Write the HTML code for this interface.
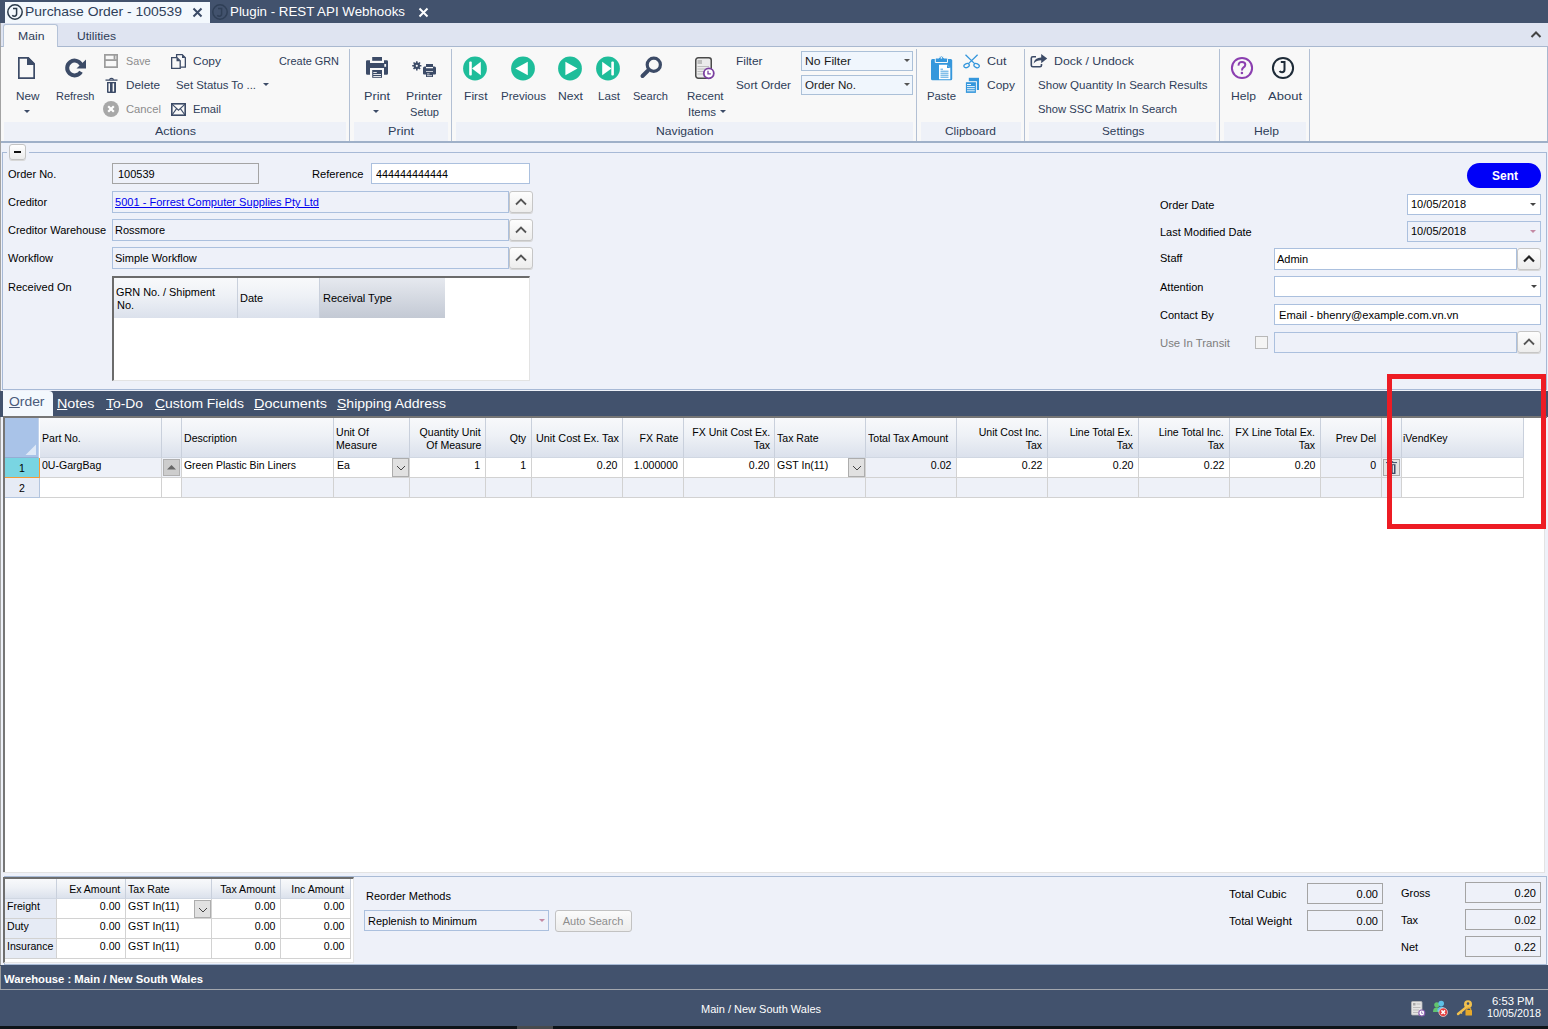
<!DOCTYPE html>
<html><head><meta charset="utf-8"><style>
html,body{margin:0;padding:0}
body{width:1548px;height:1029px;position:relative;overflow:hidden;background:#eef1f9;font-family:"Liberation Sans", sans-serif}
body>div{position:absolute}
.t{position:absolute;white-space:nowrap}
</style></head><body>
<div style="left:0px;top:0px;width:1548px;height:23px;background:#42526d"></div>
<div style="left:5px;top:2px;width:205px;height:21px;background:#f3f8fd"></div>
<svg style="position:absolute;left:7px;top:4px" width="16" height="16" viewBox="0 0 16 16"><circle cx="8" cy="8" r="7.2" fill="none" stroke="#2b3a4a" stroke-width="1.5"/><path d="M6 4.6 H9.6 V9.8 Q9.6 12.2 7.4 12.2 Q6 12.2 5.3 11.2" fill="none" stroke="#2b3a4a" stroke-width="1.5"/></svg>
<div class="t" style="left:25px;top:3.94px;font-size:12.9px;line-height:16px;color:#2f3f5a;font-weight:400;;transform:scaleX(1.0793);transform-origin:left top;">Purchase Order - 100539</div>
<svg style="position:absolute;left:192px;top:7px" width="11" height="11" viewBox="0 0 11 11"><path d="M1.5 1.5 L9.5 9.5 M9.5 1.5 L1.5 9.5" stroke="#3a4a66" stroke-width="2"/></svg>
<svg style="position:absolute;left:212px;top:4px" width="16" height="16" viewBox="0 0 16 16"><circle cx="8" cy="8" r="7.2" fill="none" stroke="#2f3f56" stroke-width="1.5"/><path d="M6 4.6 H9.6 V9.8 Q9.6 12.2 7.4 12.2 Q6 12.2 5.3 11.2" fill="none" stroke="#2f3f56" stroke-width="1.5"/></svg>
<div class="t" style="left:230px;top:3.94px;font-size:12.9px;line-height:16px;color:#ffffff;font-weight:400;;transform:scaleX(1.0334);transform-origin:left top;">Plugin - REST API Webhooks</div>
<svg style="position:absolute;left:418px;top:7px" width="11" height="11" viewBox="0 0 11 11"><path d="M1.5 1.5 L9.5 9.5 M9.5 1.5 L1.5 9.5" stroke="#ffffff" stroke-width="2"/></svg>
<div style="left:0px;top:23px;width:1548px;height:24px;background:#dfe4f1"></div>
<div style="left:0px;top:46px;width:1548px;height:1px;background:#a9b8cf"></div>
<div style="left:3px;top:24px;width:55px;height:23px;background:#f8f8f8;border:1px solid #b5c3d8;border-bottom:none;border-radius:3px 3px 0 0;box-sizing:border-box"></div>
<div class="t" style="left:17.5px;top:29.20px;font-size:11.5px;line-height:14px;color:#2f3d58;font-weight:400;;transform:scaleX(1.0627);transform-origin:left top;">Main</div>
<div class="t" style="left:76.5px;top:29.20px;font-size:11.5px;line-height:14px;color:#2f3d58;font-weight:400;;transform:scaleX(1.0523);transform-origin:left top;">Utilities</div>
<svg style="position:absolute;left:1530px;top:30px" width="12" height="10" viewBox="0 0 12 10"><path d="M1.5 7 L6 2.5 L10.5 7" fill="none" stroke="#444" stroke-width="2"/></svg>
<div style="left:0px;top:47px;width:1548px;height:95px;background:#f8f8f8"></div>
<div style="left:1547px;top:47px;width:1px;height:95px;background:#a9b8cf"></div>
<div style="left:0px;top:141px;width:1548px;height:2px;background:#9fb0c8"></div>
<div style="left:4px;top:122px;width:342px;height:19px;background:#eef1f8"></div>
<div style="left:354px;top:122px;width:94px;height:19px;background:#eef1f8"></div>
<div style="left:456px;top:122px;width:457px;height:19px;background:#eef1f8"></div>
<div style="left:921px;top:122px;width:100px;height:19px;background:#eef1f8"></div>
<div style="left:1029px;top:122px;width:187px;height:19px;background:#eef1f8"></div>
<div style="left:1224px;top:122px;width:82px;height:19px;background:#eef1f8"></div>
<div style="left:349px;top:49px;width:1px;height:92px;background:#b3c0d4"></div>
<div style="left:451px;top:49px;width:1px;height:92px;background:#b3c0d4"></div>
<div style="left:916px;top:49px;width:1px;height:92px;background:#b3c0d4"></div>
<div style="left:1024px;top:49px;width:1px;height:92px;background:#b3c0d4"></div>
<div style="left:1219px;top:49px;width:1px;height:92px;background:#b3c0d4"></div>
<div style="left:1309px;top:49px;width:1px;height:92px;background:#b3c0d4"></div>
<div class="t" style="left:155px;top:124.20px;font-size:11.5px;line-height:14px;color:#2f3d58;font-weight:400;;transform:scaleX(1.0870);transform-origin:left top;">Actions</div>
<div class="t" style="left:388px;top:124.20px;font-size:11.5px;line-height:14px;color:#2f3d58;font-weight:400;;transform:scaleX(1.0991);transform-origin:left top;">Print</div>
<div class="t" style="left:655.5px;top:124.20px;font-size:11.5px;line-height:14px;color:#2f3d58;font-weight:400;;transform:scaleX(1.0581);transform-origin:left top;">Navigation</div>
<div class="t" style="left:945px;top:124.20px;font-size:11.5px;line-height:14px;color:#2f3d58;font-weight:400;;transform:scaleX(1.0359);transform-origin:left top;">Clipboard</div>
<div class="t" style="left:1102px;top:124.20px;font-size:11.5px;line-height:14px;color:#2f3d58;font-weight:400;;transform:scaleX(1.0226);transform-origin:left top;">Settings</div>
<div class="t" style="left:1253.5px;top:124.20px;font-size:11.5px;line-height:14px;color:#2f3d58;font-weight:400;;transform:scaleX(1.0568);transform-origin:left top;">Help</div>
<svg style="position:absolute;left:17px;top:56px" width="20" height="24" viewBox="0 0 20 24"><path d="M1.85 1.85 H11 L17.15 8 V22.15 H1.85 Z" fill="none" stroke="#3c4b67" stroke-width="1.7"/><path d="M10 1 H11.5 L18 7.5 V9 H10 Z" fill="#3c4b67"/></svg>
<div class="t" style="left:15.5px;top:89.20px;font-size:11.5px;line-height:14px;color:#2f3d58;font-weight:400;;transform:scaleX(1.0210);transform-origin:left top;">New</div>
<svg style="position:absolute;left:23.5px;top:109.5px" width="6" height="4" viewBox="0 0 6 4"><path d="M0 0 H6 L3 3 Z" fill="#3c4b67"/></svg>
<svg style="position:absolute;left:63px;top:57px" width="24" height="23" viewBox="0 0 24 23"><path d="M18.0 14.7 A7.4 7.4 0 1 1 18.3 7.87" fill="none" stroke="#3c4b67" stroke-width="4"/><path d="M13.5 11.6 H23 V2.5 Z" fill="#3c4b67"/></svg>
<div class="t" style="left:55.5px;top:89.20px;font-size:11.5px;line-height:14px;color:#2f3d58;font-weight:400;;transform:scaleX(0.9558);transform-origin:left top;">Refresh</div>
<svg style="position:absolute;left:104px;top:54px" width="14" height="14" viewBox="0 0 14 14"><rect x="0.85" y="0.85" width="12.3" height="12.3" fill="none" stroke="#9c9c9c" stroke-width="1.7"/><rect x="0" y="5.2" width="14" height="1.8" fill="#9c9c9c"/><rect x="9.6" y="0" width="1.8" height="5.5" fill="#9c9c9c"/></svg>
<div class="t" style="left:126px;top:53.90px;font-size:11.5px;line-height:14px;color:#8c8c8c;font-weight:400;;transform:scaleX(0.9344);transform-origin:left top;">Save</div>
<svg style="position:absolute;left:105px;top:77px" width="13" height="16" viewBox="0 0 13 16"><path d="M0.5 3.1 H12.5" stroke="#3c4b67" stroke-width="1.3"/><path d="M4.3 2.6 Q6.5 0.2 8.7 2.6" fill="none" stroke="#3c4b67" stroke-width="1.2"/><path d="M2 5 H11 V15 Q11 16 10 16 H3 Q2 16 2 15 Z" fill="#3c4b67"/><rect x="3.5" y="6.3" width="1.5" height="8.3" fill="#f8f8f8"/><rect x="7.6" y="6.3" width="1.5" height="8.3" fill="#f8f8f8"/></svg>
<div class="t" style="left:126px;top:78.20px;font-size:11.5px;line-height:14px;color:#2f3d58;font-weight:400;;transform:scaleX(1.0226);transform-origin:left top;">Delete</div>
<svg style="position:absolute;left:103px;top:101px" width="16" height="16" viewBox="0 0 16 16"><circle cx="8" cy="8" r="8" fill="#a8a8a8"/><path d="M5.2 5.2 L10.8 10.8 M10.8 5.2 L5.2 10.8" stroke="#fff" stroke-width="2.2"/></svg>
<div class="t" style="left:126px;top:102.20px;font-size:11.5px;line-height:14px;color:#8c8c8c;font-weight:400;;transform:scaleX(0.9773);transform-origin:left top;">Cancel</div>
<svg style="position:absolute;left:171px;top:54px" width="15" height="15" viewBox="0 0 15 15"><path d="M5.6 3.4 V0.65 H11.2 L14.35 3.8 V13.2 H9.2" fill="none" stroke="#3c4b67" stroke-width="1.3"/><path d="M0.65 3.6 H6 L9.2 6.8 V14.35 H0.65 Z" fill="none" stroke="#3c4b67" stroke-width="1.3"/><path d="M5.5 3.6 V7.2 H9.2 Z" fill="#3c4b67"/><path d="M11 0.6 V4 H14.4 Z" fill="#3c4b67"/></svg>
<div class="t" style="left:193px;top:54.20px;font-size:11.5px;line-height:14px;color:#2f3d58;font-weight:400;;transform:scaleX(1.0425);transform-origin:left top;">Copy</div>
<div class="t" style="left:176px;top:78.20px;font-size:11.5px;line-height:14px;color:#2f3d58;font-weight:400;;transform:scaleX(0.9878);transform-origin:left top;">Set Status To ...</div>
<svg style="position:absolute;left:263px;top:83px" width="6" height="4" viewBox="0 0 6 4"><path d="M0 0 H6 L3 3 Z" fill="#3c4b67"/></svg>
<svg style="position:absolute;left:171px;top:103px" width="15" height="13" viewBox="0 0 15 13"><rect x="0.8" y="0.8" width="13.4" height="11.4" fill="none" stroke="#3c4b67" stroke-width="1.6"/><path d="M1 1.2 L7.5 7.2 L14 1.2 M1 12 L5.6 5.6 M14 12 L9.4 5.6" fill="none" stroke="#3c4b67" stroke-width="1.1"/></svg>
<div class="t" style="left:193px;top:102.20px;font-size:11.5px;line-height:14px;color:#2f3d58;font-weight:400;;transform:scaleX(0.9734);transform-origin:left top;">Email</div>
<div class="t" style="left:279px;top:54.20px;font-size:11.5px;line-height:14px;color:#2f3d58;font-weight:400;;transform:scaleX(0.9481);transform-origin:left top;">Create GRN</div>
<svg style="position:absolute;left:365px;top:56px" width="24" height="23" viewBox="0 0 24 23"><rect x="7.2" y="1" width="9.8" height="3.8" fill="#3c4b67"/><path d="M1 5.5 Q1 4.2 2.3 4.2 H5 V7 H19 V4.2 H21.7 Q23 4.2 23 5.5 V17.4 Q23 18.7 21.7 18.7 H19 V12 H5 V18.7 H2.3 Q1 18.7 1 17.4 Z" fill="#3c4b67"/><rect x="19.3" y="8" width="1.8" height="2.8" fill="#f8f8f8"/><rect x="7.2" y="14" width="9.8" height="7.8" fill="#3c4b67"/><path d="M8.3 16.5 H11.8 M8.3 18.5 H16 M8.3 20.5 H16" stroke="#f8f8f8" stroke-width="0.9"/></svg>
<div class="t" style="left:364px;top:89.20px;font-size:11.5px;line-height:14px;color:#2f3d58;font-weight:400;;transform:scaleX(1.0991);transform-origin:left top;">Print</div>
<svg style="position:absolute;left:372.5px;top:109.5px" width="6" height="4" viewBox="0 0 6 4"><path d="M0 0 H6 L3 3 Z" fill="#3c4b67"/></svg>
<svg style="position:absolute;left:411px;top:60px" width="26" height="18" viewBox="0 0 26 18"><circle cx="5.8" cy="5.8" r="3.2" fill="#3c4b67"/><path d="M5.8 1.2 V10.4 M1.2 5.8 H10.4 M2.55 2.55 L9.05 9.05 M9.05 2.55 L2.55 9.05" stroke="#3c4b67" stroke-width="1.6"/><circle cx="5.8" cy="5.8" r="1.1" fill="#f8f8f8"/><rect x="15" y="4" width="7" height="3" fill="#3c4b67"/><path d="M12 8 Q12 6.5 13.5 6.5 H15 V8.3 H22 V6.5 H23.5 Q25 6.5 25 8 V13.5 Q25 14.5 24 14.5 H22 V11.3 H15 V14.5 H13 Q12 14.5 12 13.5 Z" fill="#3c4b67"/><rect x="15" y="12" width="7" height="5" fill="#3c4b67"/><path d="M16 13.9 H18.5 M16 15.7 H21" stroke="#f8f8f8" stroke-width="0.8"/></svg>
<div class="t" style="left:406px;top:89.20px;font-size:11.5px;line-height:14px;color:#2f3d58;font-weight:400;;transform:scaleX(1.0627);transform-origin:left top;">Printer</div>
<div class="t" style="left:410px;top:105.20px;font-size:11.5px;line-height:14px;color:#2f3d58;font-weight:400;;transform:scaleX(0.9647);transform-origin:left top;">Setup</div>
<svg style="position:absolute;left:462px;top:55.4px" width="26" height="27" viewBox="0 0 26 27"><circle cx="13" cy="13.5" r="11.9" fill="#1ebd9a"/><rect x="7.2" y="6.5" width="2.6" height="14" rx="1" fill="#fff"/><path d="M10 13.5 L18.8 6.8 V20.2 Z" fill="#fff"/></svg>
<svg style="position:absolute;left:510px;top:55.4px" width="26" height="27" viewBox="0 0 26 27"><circle cx="13" cy="13.5" r="11.9" fill="#1ebd9a"/><path d="M5.4 13.5 L17.8 6.8 V20.2 Z" fill="#fff"/></svg>
<svg style="position:absolute;left:557px;top:55.4px" width="26" height="27" viewBox="0 0 26 27"><circle cx="13" cy="13.5" r="11.9" fill="#1ebd9a"/><path d="M20.5 13.5 L8.4 6.8 V20.2 Z" fill="#fff"/></svg>
<svg style="position:absolute;left:595px;top:55.4px" width="26" height="27" viewBox="0 0 26 27"><circle cx="13" cy="13.5" r="11.9" fill="#1ebd9a"/><rect x="16.3" y="6.5" width="2.6" height="14" rx="1" fill="#fff"/><path d="M16.5 13.5 L7.2 6.8 V20.2 Z" fill="#fff"/></svg>
<div class="t" style="left:464px;top:89.20px;font-size:11.5px;line-height:14px;color:#2f3d58;font-weight:400;;transform:scaleX(1.0510);transform-origin:left top;">First</div>
<div class="t" style="left:500.5px;top:89.20px;font-size:11.5px;line-height:14px;color:#2f3d58;font-weight:400;;transform:scaleX(1.0056);transform-origin:left top;">Previous</div>
<div class="t" style="left:558.3px;top:89.20px;font-size:11.5px;line-height:14px;color:#2f3d58;font-weight:400;;transform:scaleX(1.0568);transform-origin:left top;">Next</div>
<div class="t" style="left:598px;top:89.20px;font-size:11.5px;line-height:14px;color:#2f3d58;font-weight:400;;transform:scaleX(1.0115);transform-origin:left top;">Last</div>
<svg style="position:absolute;left:639px;top:55px" width="24" height="25" viewBox="0 0 24 25"><circle cx="14.8" cy="9.8" r="6.6" fill="none" stroke="#3c4b67" stroke-width="3.2"/><path d="M8.8 15.8 L3.5 21" stroke="#3c4b67" stroke-width="4" stroke-linecap="round"/></svg>
<div class="t" style="left:633px;top:89.20px;font-size:11.5px;line-height:14px;color:#2f3d58;font-weight:400;;transform:scaleX(0.9605);transform-origin:left top;">Search</div>
<svg style="position:absolute;left:694px;top:56px" width="21" height="24" viewBox="0 0 21 24"><rect x="1.75" y="1.75" width="15.5" height="20.5" rx="2.5" fill="#ebebeb" stroke="#4a4a4a" stroke-width="1.5"/><rect x="3.5" y="4" width="4.5" height="4" fill="#bdbdbd"/><path d="M3.5 10.5 H15 M3.5 13 H15 M3.5 15.5 H12 M3.5 18 H11" stroke="#bdbdbd" stroke-width="1.2"/><circle cx="14.8" cy="17.3" r="5" fill="#fff" stroke="#7a3fa0" stroke-width="1.8"/><path d="M14 14.8 V17.8 H16.8" fill="none" stroke="#7a3fa0" stroke-width="1.3"/></svg>
<div class="t" style="left:686.5px;top:89.20px;font-size:11.5px;line-height:14px;color:#2f3d58;font-weight:400;;transform:scaleX(1.0017);transform-origin:left top;">Recent</div>
<div class="t" style="left:688px;top:105.20px;font-size:11.5px;line-height:14px;color:#2f3d58;font-weight:400;;transform:scaleX(0.9956);transform-origin:left top;">Items</div>
<svg style="position:absolute;left:719.5px;top:109.5px" width="6" height="4" viewBox="0 0 6 4"><path d="M0 0 H6 L3 3 Z" fill="#3c4b67"/></svg>
<div class="t" style="left:736px;top:54.20px;font-size:11.5px;line-height:14px;color:#2f3d58;font-weight:400;;transform:scaleX(1.0367);transform-origin:left top;">Filter</div>
<div class="t" style="left:736px;top:78.20px;font-size:11.5px;line-height:14px;color:#2f3d58;font-weight:400;;transform:scaleX(1.0244);transform-origin:left top;">Sort Order</div>
<div style="left:801px;top:51px;width:112px;height:20px;background:#f0f6fd;border:1px solid #abc0d8;box-sizing:border-box"></div>
<div class="t" style="left:805px;top:54.20px;font-size:11.5px;line-height:14px;color:#1a1a1a;font-weight:400;;transform:scaleX(1.0586);transform-origin:left top;">No Filter</div>
<svg style="position:absolute;left:904px;top:59px" width="6" height="4" viewBox="0 0 6 4"><path d="M0 0 H6 L3 3 Z" fill="#555"/></svg>
<div style="left:801px;top:75px;width:112px;height:20px;background:#f0f6fd;border:1px solid #abc0d8;box-sizing:border-box"></div>
<div class="t" style="left:805px;top:78.20px;font-size:11.5px;line-height:14px;color:#1a1a1a;font-weight:400;;transform:scaleX(1.0099);transform-origin:left top;">Order No.</div>
<svg style="position:absolute;left:904px;top:83px" width="6" height="4" viewBox="0 0 6 4"><path d="M0 0 H6 L3 3 Z" fill="#555"/></svg>
<svg style="position:absolute;left:930px;top:55px" width="24" height="26" viewBox="0 0 24 26"><rect x="1" y="4" width="21.2" height="21.2" rx="1.5" fill="#3597dc"/><path d="M5.3 7.5 V4.2 Q5.3 3 6.5 3 H9 Q9 1 11.4 1 Q13.8 1 13.8 3 H16.3 Q17.5 3 17.5 4.2 V7.5 Z" fill="#3597dc" stroke="#f8f8f8" stroke-width="1"/><circle cx="11.4" cy="2.8" r="0.9" fill="#f8f8f8"/><path d="M9 9.7 H17.2 L20.3 12.8 V24.2 H9 Z" fill="#fff"/><path d="M17 9.7 V13 H20.3 Z" fill="#3597dc"/><path d="M10.5 14.2 H13 M10.5 16.2 H18.5 M10.5 18.2 H18.5 M10.5 20.2 H18.5 M10.5 22.2 H18.5" stroke="#3597dc" stroke-width="0.9"/></svg>
<div class="t" style="left:927px;top:89.20px;font-size:11.5px;line-height:14px;color:#2f3d58;font-weight:400;;transform:scaleX(0.9857);transform-origin:left top;">Paste</div>
<svg style="position:absolute;left:963px;top:54px" width="18" height="15" viewBox="0 0 18 15"><path d="M2.5 0.8 L11.6 9.6 M14.6 0.8 L5.5 9.6" stroke="#3597dc" stroke-width="1.3"/><ellipse cx="3.6" cy="11.6" rx="2.8" ry="2" fill="none" stroke="#3597dc" stroke-width="1.3" transform="rotate(-25 3.6 11.6)"/><ellipse cx="13.6" cy="11.6" rx="2.8" ry="2" fill="none" stroke="#3597dc" stroke-width="1.3" transform="rotate(25 13.6 11.6)"/></svg>
<div class="t" style="left:987px;top:54.20px;font-size:11.5px;line-height:14px;color:#2f3d58;font-weight:400;;transform:scaleX(1.0890);transform-origin:left top;">Cut</div>
<svg style="position:absolute;left:965px;top:77px" width="15" height="16" viewBox="0 0 15 16"><rect x="3.8" y="0.8" width="10.2" height="12.2" fill="#3597dc"/><rect x="0" y="4.2" width="11.9" height="11.8" fill="#f8f8f8"/><rect x="0.9" y="5.2" width="10" height="10.7" fill="#3597dc"/><path d="M2 7.5 H6 M2 9.6 H9.8 M2 11.7 H9.8 M2 13.8 H9.8" stroke="#fff" stroke-width="0.9"/></svg>
<div class="t" style="left:987px;top:78.20px;font-size:11.5px;line-height:14px;color:#2f3d58;font-weight:400;;transform:scaleX(1.0425);transform-origin:left top;">Copy</div>
<svg style="position:absolute;left:1030px;top:53px" width="18" height="15" viewBox="0 0 18 15"><path d="M6 3.8 H2.8 Q1.3 3.8 1.3 5.3 V12.2 Q1.3 13.7 2.8 13.7 H10 Q11.5 13.7 11.5 12.2 V11" fill="none" stroke="#3c4b67" stroke-width="1.6"/><path d="M3.6 10.5 Q4.6 4.7 11.2 4.6 V1 L17.2 5.6 L11.2 10.2 V7.2 Q6.6 7.2 3.6 10.5 Z" fill="#3c4b67"/></svg>
<div class="t" style="left:1054px;top:54.20px;font-size:11.5px;line-height:14px;color:#2f3d58;font-weight:400;;transform:scaleX(1.0698);transform-origin:left top;">Dock / Undock</div>
<div class="t" style="left:1038px;top:78.20px;font-size:11.5px;line-height:14px;color:#2f3d58;font-weight:400;;transform:scaleX(1.0044);transform-origin:left top;">Show Quantity In Search Results</div>
<div class="t" style="left:1038px;top:102.20px;font-size:11.5px;line-height:14px;color:#2f3d58;font-weight:400;;transform:scaleX(0.9752);transform-origin:left top;">Show SSC Matrix In Search</div>
<svg style="position:absolute;left:1230px;top:56px" width="24" height="24" viewBox="0 0 24 24"><circle cx="12" cy="12" r="10.1" fill="none" stroke="#8b3fb0" stroke-width="2"/><path d="M8.6 9.6 Q8.4 6 12 6 Q15.3 6 15.3 8.7 Q15.3 10.3 13.3 11.6 Q12 12.5 12 14.6" fill="none" stroke="#8b3fb0" stroke-width="2"/><circle cx="11.9" cy="17" r="1.3" fill="#8b3fb0"/></svg>
<div class="t" style="left:1230.5px;top:89.20px;font-size:11.5px;line-height:14px;color:#2f3d58;font-weight:400;;transform:scaleX(1.0568);transform-origin:left top;">Help</div>
<svg style="position:absolute;left:1271px;top:56px" width="24" height="24" viewBox="0 0 24 24"><circle cx="12" cy="12" r="10.1" fill="none" stroke="#1e2b38" stroke-width="2"/><path d="M9.8 6 H13.5 V13.5 Q13.5 16.3 11 16.3 Q9.3 16.3 8.6 15" fill="none" stroke="#1e2b38" stroke-width="2"/></svg>
<div class="t" style="left:1267.5px;top:89.20px;font-size:11.5px;line-height:14px;color:#2f3d58;font-weight:400;;transform:scaleX(1.1310);transform-origin:left top;">About</div>
<div style="left:0px;top:23px;width:1px;height:966px;background:#a3a3a3"></div>
<div style="left:1px;top:143px;width:1547px;height:247px;background:#eef1f9"></div>
<div style="left:2px;top:152px;width:1545px;height:238px;border:1px solid #a7b9d6;box-sizing:border-box"></div>
<div style="left:7px;top:150px;width:22px;height:5px;background:#eef1f9"></div>
<div style="left:9px;top:144px;width:17px;height:16px;background:linear-gradient(#ffffff,#ececec);border:1px solid #c3c3c3;border-radius:3px;box-sizing:border-box;box-shadow:0 1px 0 #d8d8d8"></div>
<div style="left:14px;top:151px;width:7px;height:1.5px;background:#111"></div>
<div class="t" style="left:8px;top:167.36px;font-size:11px;line-height:14px;color:#000;font-weight:400;;">Order No.</div>
<div class="t" style="left:8px;top:195.36px;font-size:11px;line-height:14px;color:#000;font-weight:400;;">Creditor</div>
<div class="t" style="left:8px;top:223.36px;font-size:11px;line-height:14px;color:#000;font-weight:400;;">Creditor Warehouse</div>
<div class="t" style="left:8px;top:251.36px;font-size:11px;line-height:14px;color:#000;font-weight:400;;">Workflow</div>
<div class="t" style="left:8px;top:280.36px;font-size:11px;line-height:14px;color:#000;font-weight:400;;">Received On</div>
<div style="left:112px;top:163px;width:147px;height:21px;border:1px solid #a4a4a4;box-sizing:border-box"></div>
<div class="t" style="left:118px;top:167.36px;font-size:11px;line-height:14px;color:#000;font-weight:400;;">100539</div>
<div class="t" style="left:312px;top:167.36px;font-size:11px;line-height:14px;color:#000;font-weight:400;;transform:scaleX(1.0145);transform-origin:left top;">Reference</div>
<div style="left:371px;top:163px;width:159px;height:21px;background:#fff;border:1px solid #abc0de;box-sizing:border-box"></div>
<div class="t" style="left:376px;top:167.36px;font-size:11px;line-height:14px;color:#000;font-weight:400;;transform:scaleX(0.9806);transform-origin:left top;">444444444444</div>
<div style="left:112px;top:191px;width:397px;height:22px;border:1px solid #abc0de;box-sizing:border-box"></div>
<div style="left:509px;top:191px;width:24px;height:22px;background:linear-gradient(#fdfdfd,#ededed);border:1px solid #c6c6c6;border-radius:3px;box-sizing:border-box;box-shadow:0 1px 0 #d6d6d6"></div>
<svg style="position:absolute;left:514px;top:197px" width="14" height="9" viewBox="0 0 14 9"><path d="M2 7.5 L7 2.5 L12 7.5" fill="none" stroke="#555" stroke-width="1.8"/></svg>
<div class="t" style="left:115px;top:195.36px;font-size:11px;line-height:14px;color:#0000ee;font-weight:400;text-decoration:underline;transform:scaleX(1.0050);transform-origin:left top;">5001 - Forrest Computer Supplies Pty Ltd</div>
<div style="left:112px;top:219px;width:397px;height:22px;border:1px solid #abc0de;box-sizing:border-box"></div>
<div style="left:509px;top:219px;width:24px;height:22px;background:linear-gradient(#fdfdfd,#ededed);border:1px solid #c6c6c6;border-radius:3px;box-sizing:border-box;box-shadow:0 1px 0 #d6d6d6"></div>
<svg style="position:absolute;left:514px;top:225px" width="14" height="9" viewBox="0 0 14 9"><path d="M2 7.5 L7 2.5 L12 7.5" fill="none" stroke="#555" stroke-width="1.8"/></svg>
<div class="t" style="left:115px;top:223.36px;font-size:11px;line-height:14px;color:#000;font-weight:400;;">Rossmore</div>
<div style="left:112px;top:247px;width:397px;height:22px;border:1px solid #abc0de;box-sizing:border-box"></div>
<div style="left:509px;top:247px;width:24px;height:22px;background:linear-gradient(#fdfdfd,#ededed);border:1px solid #c6c6c6;border-radius:3px;box-sizing:border-box;box-shadow:0 1px 0 #d6d6d6"></div>
<svg style="position:absolute;left:514px;top:253px" width="14" height="9" viewBox="0 0 14 9"><path d="M2 7.5 L7 2.5 L12 7.5" fill="none" stroke="#555" stroke-width="1.8"/></svg>
<div class="t" style="left:115px;top:251.36px;font-size:11px;line-height:14px;color:#000;font-weight:400;;">Simple Workflow</div>
<div style="left:112px;top:276px;width:418px;height:105px;background:#fff;border:1px solid;border-color:#6b6b6b #e3e3e3 #e3e3e3 #6b6b6b;border-width:2px 1px 1px 2px;box-sizing:border-box"></div>
<div style="left:114px;top:278px;width:124px;height:40px;background:linear-gradient(#f8f9fb 0%,#eef1f6 45%,#dbe1ec 100%);border-right:1px solid #c9d0dc;box-sizing:border-box"></div>
<div style="left:238px;top:278px;width:82px;height:40px;background:linear-gradient(#f8f9fb 0%,#eef1f6 45%,#dbe1ec 100%);border-right:1px solid #c9d0dc;box-sizing:border-box"></div>
<div style="left:320px;top:278px;width:125px;height:40px;background:linear-gradient(#e6e9ef,#c3c9d4);box-sizing:border-box"></div>
<div class="t" style="left:115.5px;top:285.36px;font-size:11px;line-height:14px;color:#000;font-weight:400;;transform:scaleX(0.9874);transform-origin:left top;">GRN No. / Shipment</div>
<div class="t" style="left:117px;top:298.36px;font-size:11px;line-height:14px;color:#000;font-weight:400;;">No.</div>
<div class="t" style="left:240px;top:291.36px;font-size:11px;line-height:14px;color:#000;font-weight:400;;">Date</div>
<div class="t" style="left:323px;top:291.36px;font-size:11px;line-height:14px;color:#000;font-weight:400;;transform:scaleX(1.0016);transform-origin:left top;">Receival Type</div>
<div style="left:1467px;top:163px;width:74px;height:25px;background:#0000f8;border-radius:13px"></div>
<div class="t" style="left:1491.5px;top:168.53px;font-size:12px;line-height:15px;color:#fff;font-weight:700;;transform:scaleX(0.9994);transform-origin:left top;">Sent</div>
<div class="t" style="left:1160px;top:198.36px;font-size:11px;line-height:14px;color:#000;font-weight:400;;">Order Date</div>
<div style="left:1407px;top:194px;width:134px;height:21px;background:#fff;border:1px solid #abc0de;box-sizing:border-box"></div>
<div class="t" style="left:1411px;top:197.36px;font-size:11px;line-height:14px;color:#000;font-weight:400;;">10/05/2018</div>
<svg style="position:absolute;left:1530px;top:203px" width="6" height="4" viewBox="0 0 6 4"><path d="M0 0 H6 L3 3 Z" fill="#444"/></svg>
<div class="t" style="left:1160px;top:225.36px;font-size:11px;line-height:14px;color:#000;font-weight:400;;">Last Modified Date</div>
<div style="left:1407px;top:221px;width:134px;height:21px;border:1px solid #abc0de;box-sizing:border-box"></div>
<div class="t" style="left:1411px;top:224.36px;font-size:11px;line-height:14px;color:#000;font-weight:400;;">10/05/2018</div>
<svg style="position:absolute;left:1530px;top:230px" width="6" height="4" viewBox="0 0 6 4"><path d="M0 0 H6 L3 3 Z" fill="#c48aa4"/></svg>
<div class="t" style="left:1160px;top:251.36px;font-size:11px;line-height:14px;color:#000;font-weight:400;;">Staff</div>
<div style="left:1274px;top:248px;width:243px;height:22px;background:#fff;border:1px solid #abc0de;box-sizing:border-box"></div>
<div class="t" style="left:1277px;top:252.36px;font-size:11px;line-height:14px;color:#000;font-weight:400;;">Admin</div>
<div style="left:1517px;top:248px;width:24px;height:22px;background:linear-gradient(#fdfdfd,#ededed);border:1px solid #c6c6c6;border-radius:3px;box-sizing:border-box;box-shadow:0 1px 0 #d6d6d6"></div>
<svg style="position:absolute;left:1522px;top:254px" width="14" height="9" viewBox="0 0 14 9"><path d="M2 7.5 L7 2.5 L12 7.5" fill="none" stroke="#222" stroke-width="2.2"/></svg>
<div class="t" style="left:1160px;top:280.36px;font-size:11px;line-height:14px;color:#000;font-weight:400;;">Attention</div>
<div style="left:1274px;top:276px;width:267px;height:21px;background:#fff;border:1px solid #abc0de;box-sizing:border-box"></div>
<svg style="position:absolute;left:1531px;top:285px" width="6" height="4" viewBox="0 0 6 4"><path d="M0 0 H6 L3 3 Z" fill="#444"/></svg>
<div class="t" style="left:1160px;top:308.36px;font-size:11px;line-height:14px;color:#000;font-weight:400;;">Contact By</div>
<div style="left:1274px;top:304px;width:267px;height:21px;background:#fff;border:1px solid #abc0de;box-sizing:border-box"></div>
<div class="t" style="left:1279px;top:308.36px;font-size:11px;line-height:14px;color:#000;font-weight:400;;transform:scaleX(1.0150);transform-origin:left top;">Email - bhenry@example.com.vn.vn</div>
<div class="t" style="left:1160px;top:336.36px;font-size:11px;line-height:14px;color:#7d7d7d;font-weight:400;;transform:scaleX(1.0315);transform-origin:left top;">Use In Transit</div>
<div style="left:1255px;top:336px;width:13px;height:13px;background:#f4f4f4;border:1px solid #b8b8b8;box-sizing:border-box"></div>
<div style="left:1274px;top:332px;width:243px;height:21px;border:1px solid #abc0de;box-sizing:border-box"></div>
<div style="left:1517px;top:331px;width:24px;height:22px;background:linear-gradient(#fdfdfd,#ededed);border:1px solid #c6c6c6;border-radius:3px;box-sizing:border-box;box-shadow:0 1px 0 #d6d6d6"></div>
<svg style="position:absolute;left:1522px;top:337px" width="14" height="9" viewBox="0 0 14 9"><path d="M2 7.5 L7 2.5 L12 7.5" fill="none" stroke="#555" stroke-width="1.8"/></svg>
<div style="left:0px;top:391px;width:1548px;height:26px;background:#42526d"></div>
<div style="left:2px;top:389px;width:1545px;height:1px;background:#a7b9d6"></div>
<div style="left:3px;top:391px;width:50px;height:25px;background:#f3f8fd;border-radius:0 4px 0 0"></div>
<div class="t" style="left:9px;top:393.04px;font-size:13.5px;line-height:17px;color:#4a5a7a;font-weight:400;;transform:scaleX(1.0281);transform-origin:left top;"><u>O</u>rder</div>
<div class="t" style="left:57px;top:395.04px;font-size:13.5px;line-height:17px;color:#fff;font-weight:400;;transform:scaleX(1.0629);transform-origin:left top;"><u>N</u>otes</div>
<div class="t" style="left:105.8px;top:395.04px;font-size:13.5px;line-height:17px;color:#fff;font-weight:400;;transform:scaleX(1.0273);transform-origin:left top;"><u>T</u>o-Do</div>
<div class="t" style="left:155px;top:395.04px;font-size:13.5px;line-height:17px;color:#fff;font-weight:400;;transform:scaleX(1.0315);transform-origin:left top;"><u>C</u>ustom Fields</div>
<div class="t" style="left:254px;top:395.04px;font-size:13.5px;line-height:17px;color:#fff;font-weight:400;;transform:scaleX(1.0691);transform-origin:left top;"><u>D</u>ocuments</div>
<div class="t" style="left:337px;top:395.04px;font-size:13.5px;line-height:17px;color:#fff;font-weight:400;;transform:scaleX(1.0372);transform-origin:left top;"><u>S</u>hipping Address</div>
<div style="left:3px;top:416px;width:1542px;height:457px;background:#fff"></div>
<div style="left:3px;top:416px;width:1544px;height:2px;background:#767676"></div>
<div style="left:3px;top:416px;width:2px;height:457px;background:#767676"></div>
<div style="left:3px;top:872px;width:1542px;height:1px;background:#e3e3e3"></div>
<div style="left:1544px;top:418px;width:1px;height:455px;background:#e3e3e3"></div>
<div style="left:5px;top:418px;width:34px;height:40px;background:#a9c3e8;border-right:1px solid #c2d3ec;border-bottom:1px solid #94aed4;box-sizing:border-box"></div>
<svg style="position:absolute;left:25px;top:444px" width="12" height="12" viewBox="0 0 12 12"><path d="M11 0.5 V11 H0.5 Z" fill="#dfe9f7"/></svg>
<div style="left:40px;top:418px;width:122px;height:40px;background:linear-gradient(#f8f9fb 0%,#eef1f6 45%,#dbe1ec 100%);border-right:1px solid #c9d0dc;border-bottom:1px solid #d0d7e2;box-sizing:border-box"></div>
<div style="left:162px;top:418px;width:20px;height:40px;background:linear-gradient(#f8f9fb 0%,#eef1f6 45%,#dbe1ec 100%);border-right:1px solid #c9d0dc;border-bottom:1px solid #d0d7e2;box-sizing:border-box"></div>
<div style="left:182px;top:418px;width:152px;height:40px;background:linear-gradient(#f8f9fb 0%,#eef1f6 45%,#dbe1ec 100%);border-right:1px solid #c9d0dc;border-bottom:1px solid #d0d7e2;box-sizing:border-box"></div>
<div style="left:334px;top:418px;width:76px;height:40px;background:linear-gradient(#f8f9fb 0%,#eef1f6 45%,#dbe1ec 100%);border-right:1px solid #c9d0dc;border-bottom:1px solid #d0d7e2;box-sizing:border-box"></div>
<div style="left:410px;top:418px;width:76px;height:40px;background:linear-gradient(#f8f9fb 0%,#eef1f6 45%,#dbe1ec 100%);border-right:1px solid #c9d0dc;border-bottom:1px solid #d0d7e2;box-sizing:border-box"></div>
<div style="left:486px;top:418px;width:46px;height:40px;background:linear-gradient(#f8f9fb 0%,#eef1f6 45%,#dbe1ec 100%);border-right:1px solid #c9d0dc;border-bottom:1px solid #d0d7e2;box-sizing:border-box"></div>
<div style="left:532px;top:418px;width:91px;height:40px;background:linear-gradient(#f8f9fb 0%,#eef1f6 45%,#dbe1ec 100%);border-right:1px solid #c9d0dc;border-bottom:1px solid #d0d7e2;box-sizing:border-box"></div>
<div style="left:623px;top:418px;width:61px;height:40px;background:linear-gradient(#f8f9fb 0%,#eef1f6 45%,#dbe1ec 100%);border-right:1px solid #c9d0dc;border-bottom:1px solid #d0d7e2;box-sizing:border-box"></div>
<div style="left:684px;top:418px;width:91px;height:40px;background:linear-gradient(#f8f9fb 0%,#eef1f6 45%,#dbe1ec 100%);border-right:1px solid #c9d0dc;border-bottom:1px solid #d0d7e2;box-sizing:border-box"></div>
<div style="left:775px;top:418px;width:91px;height:40px;background:linear-gradient(#f8f9fb 0%,#eef1f6 45%,#dbe1ec 100%);border-right:1px solid #c9d0dc;border-bottom:1px solid #d0d7e2;box-sizing:border-box"></div>
<div style="left:866px;top:418px;width:91px;height:40px;background:linear-gradient(#f8f9fb 0%,#eef1f6 45%,#dbe1ec 100%);border-right:1px solid #c9d0dc;border-bottom:1px solid #d0d7e2;box-sizing:border-box"></div>
<div style="left:957px;top:418px;width:91px;height:40px;background:linear-gradient(#f8f9fb 0%,#eef1f6 45%,#dbe1ec 100%);border-right:1px solid #c9d0dc;border-bottom:1px solid #d0d7e2;box-sizing:border-box"></div>
<div style="left:1048px;top:418px;width:91px;height:40px;background:linear-gradient(#f8f9fb 0%,#eef1f6 45%,#dbe1ec 100%);border-right:1px solid #c9d0dc;border-bottom:1px solid #d0d7e2;box-sizing:border-box"></div>
<div style="left:1139px;top:418px;width:91px;height:40px;background:linear-gradient(#f8f9fb 0%,#eef1f6 45%,#dbe1ec 100%);border-right:1px solid #c9d0dc;border-bottom:1px solid #d0d7e2;box-sizing:border-box"></div>
<div style="left:1230px;top:418px;width:91px;height:40px;background:linear-gradient(#f8f9fb 0%,#eef1f6 45%,#dbe1ec 100%);border-right:1px solid #c9d0dc;border-bottom:1px solid #d0d7e2;box-sizing:border-box"></div>
<div style="left:1321px;top:418px;width:61px;height:40px;background:linear-gradient(#f8f9fb 0%,#eef1f6 45%,#dbe1ec 100%);border-right:1px solid #c9d0dc;border-bottom:1px solid #d0d7e2;box-sizing:border-box"></div>
<div style="left:1382px;top:418px;width:20px;height:40px;background:linear-gradient(#f8f9fb 0%,#eef1f6 45%,#dbe1ec 100%);border-right:1px solid #c9d0dc;border-bottom:1px solid #d0d7e2;box-sizing:border-box"></div>
<div style="left:1402px;top:418px;width:122px;height:40px;background:linear-gradient(#f8f9fb 0%,#eef1f6 45%,#dbe1ec 100%);border-right:1px solid #c9d0dc;border-bottom:1px solid #d0d7e2;box-sizing:border-box"></div>
<div style="left:40px;top:458px;width:122px;height:20px;background:#eef1f8;border-right:1px solid #d2d2d2;border-bottom:1px solid #d2d2d2;box-sizing:border-box"></div>
<div style="left:162px;top:458px;width:20px;height:20px;background:#eef1f8;border-right:1px solid #d2d2d2;border-bottom:1px solid #d2d2d2;box-sizing:border-box"></div>
<div style="left:182px;top:458px;width:152px;height:20px;background:#ffffff;border-right:1px solid #d2d2d2;border-bottom:1px solid #d2d2d2;box-sizing:border-box"></div>
<div style="left:334px;top:458px;width:76px;height:20px;background:#ffffff;border-right:1px solid #d2d2d2;border-bottom:1px solid #d2d2d2;box-sizing:border-box"></div>
<div style="left:410px;top:458px;width:76px;height:20px;background:#ffffff;border-right:1px solid #d2d2d2;border-bottom:1px solid #d2d2d2;box-sizing:border-box"></div>
<div style="left:486px;top:458px;width:46px;height:20px;background:#ffffff;border-right:1px solid #d2d2d2;border-bottom:1px solid #d2d2d2;box-sizing:border-box"></div>
<div style="left:532px;top:458px;width:91px;height:20px;background:#ffffff;border-right:1px solid #d2d2d2;border-bottom:1px solid #d2d2d2;box-sizing:border-box"></div>
<div style="left:623px;top:458px;width:61px;height:20px;background:#ffffff;border-right:1px solid #d2d2d2;border-bottom:1px solid #d2d2d2;box-sizing:border-box"></div>
<div style="left:684px;top:458px;width:91px;height:20px;background:#ffffff;border-right:1px solid #d2d2d2;border-bottom:1px solid #d2d2d2;box-sizing:border-box"></div>
<div style="left:775px;top:458px;width:91px;height:20px;background:#ffffff;border-right:1px solid #d2d2d2;border-bottom:1px solid #d2d2d2;box-sizing:border-box"></div>
<div style="left:866px;top:458px;width:91px;height:20px;background:#eef1f8;border-right:1px solid #d2d2d2;border-bottom:1px solid #d2d2d2;box-sizing:border-box"></div>
<div style="left:957px;top:458px;width:91px;height:20px;background:#ffffff;border-right:1px solid #d2d2d2;border-bottom:1px solid #d2d2d2;box-sizing:border-box"></div>
<div style="left:1048px;top:458px;width:91px;height:20px;background:#ffffff;border-right:1px solid #d2d2d2;border-bottom:1px solid #d2d2d2;box-sizing:border-box"></div>
<div style="left:1139px;top:458px;width:91px;height:20px;background:#ffffff;border-right:1px solid #d2d2d2;border-bottom:1px solid #d2d2d2;box-sizing:border-box"></div>
<div style="left:1230px;top:458px;width:91px;height:20px;background:#ffffff;border-right:1px solid #d2d2d2;border-bottom:1px solid #d2d2d2;box-sizing:border-box"></div>
<div style="left:1321px;top:458px;width:61px;height:20px;background:#eef1f8;border-right:1px solid #d2d2d2;border-bottom:1px solid #d2d2d2;box-sizing:border-box"></div>
<div style="left:1382px;top:458px;width:20px;height:20px;background:#eef1f8;border-right:1px solid #d2d2d2;border-bottom:1px solid #d2d2d2;box-sizing:border-box"></div>
<div style="left:1402px;top:458px;width:122px;height:20px;background:#ffffff;border-right:1px solid #d2d2d2;border-bottom:1px solid #d2d2d2;box-sizing:border-box"></div>
<div style="left:40px;top:478px;width:122px;height:20px;background:#ffffff;border-right:1px solid #d2d2d2;border-bottom:1px solid #d2d2d2;box-sizing:border-box"></div>
<div style="left:162px;top:478px;width:20px;height:20px;background:#ffffff;border-right:1px solid #d2d2d2;border-bottom:1px solid #d2d2d2;box-sizing:border-box"></div>
<div style="left:182px;top:478px;width:152px;height:20px;background:#eef1f8;border-right:1px solid #d2d2d2;border-bottom:1px solid #d2d2d2;box-sizing:border-box"></div>
<div style="left:334px;top:478px;width:76px;height:20px;background:#eef1f8;border-right:1px solid #d2d2d2;border-bottom:1px solid #d2d2d2;box-sizing:border-box"></div>
<div style="left:410px;top:478px;width:76px;height:20px;background:#eef1f8;border-right:1px solid #d2d2d2;border-bottom:1px solid #d2d2d2;box-sizing:border-box"></div>
<div style="left:486px;top:478px;width:46px;height:20px;background:#eef1f8;border-right:1px solid #d2d2d2;border-bottom:1px solid #d2d2d2;box-sizing:border-box"></div>
<div style="left:532px;top:478px;width:91px;height:20px;background:#eef1f8;border-right:1px solid #d2d2d2;border-bottom:1px solid #d2d2d2;box-sizing:border-box"></div>
<div style="left:623px;top:478px;width:61px;height:20px;background:#eef1f8;border-right:1px solid #d2d2d2;border-bottom:1px solid #d2d2d2;box-sizing:border-box"></div>
<div style="left:684px;top:478px;width:91px;height:20px;background:#eef1f8;border-right:1px solid #d2d2d2;border-bottom:1px solid #d2d2d2;box-sizing:border-box"></div>
<div style="left:775px;top:478px;width:91px;height:20px;background:#eef1f8;border-right:1px solid #d2d2d2;border-bottom:1px solid #d2d2d2;box-sizing:border-box"></div>
<div style="left:866px;top:478px;width:91px;height:20px;background:#eef1f8;border-right:1px solid #d2d2d2;border-bottom:1px solid #d2d2d2;box-sizing:border-box"></div>
<div style="left:957px;top:478px;width:91px;height:20px;background:#eef1f8;border-right:1px solid #d2d2d2;border-bottom:1px solid #d2d2d2;box-sizing:border-box"></div>
<div style="left:1048px;top:478px;width:91px;height:20px;background:#eef1f8;border-right:1px solid #d2d2d2;border-bottom:1px solid #d2d2d2;box-sizing:border-box"></div>
<div style="left:1139px;top:478px;width:91px;height:20px;background:#eef1f8;border-right:1px solid #d2d2d2;border-bottom:1px solid #d2d2d2;box-sizing:border-box"></div>
<div style="left:1230px;top:478px;width:91px;height:20px;background:#eef1f8;border-right:1px solid #d2d2d2;border-bottom:1px solid #d2d2d2;box-sizing:border-box"></div>
<div style="left:1321px;top:478px;width:61px;height:20px;background:#eef1f8;border-right:1px solid #d2d2d2;border-bottom:1px solid #d2d2d2;box-sizing:border-box"></div>
<div style="left:1382px;top:478px;width:20px;height:20px;background:#eef1f8;border-right:1px solid #d2d2d2;border-bottom:1px solid #d2d2d2;box-sizing:border-box"></div>
<div style="left:1402px;top:478px;width:122px;height:20px;background:#ffffff;border-right:1px solid #d2d2d2;border-bottom:1px solid #d2d2d2;box-sizing:border-box"></div>
<div style="left:5px;top:458px;width:35px;height:20px;background:#79d5e2;border-right:1px solid #f29a3a;border-bottom:1px solid #f29a3a;box-sizing:border-box"></div>
<div style="left:5px;top:478px;width:35px;height:20px;background:#e6ebf5;border-right:1px solid #b3c5de;border-bottom:1px solid #b3c5de;box-sizing:border-box"></div>
<div class="t" style="left:-178.5px;width:400px;text-align:center;top:461.36px;font-size:11px;line-height:14px;color:#000;font-weight:400;;transform:scaleX(0.9600);transform-origin:center top;">1</div>
<div class="t" style="left:-178.5px;width:400px;text-align:center;top:481.36px;font-size:11px;line-height:14px;color:#000;font-weight:400;;transform:scaleX(0.9600);transform-origin:center top;">2</div>
<div class="t" style="left:42px;top:431.36px;font-size:11px;line-height:14px;color:#000;font-weight:400;;transform:scaleX(0.9600);transform-origin:left top;">Part No.</div>
<div class="t" style="left:184px;top:431.36px;font-size:11px;line-height:14px;color:#000;font-weight:400;;transform:scaleX(0.9600);transform-origin:left top;">Description</div>
<div class="t" style="left:336px;top:425.36px;font-size:11px;line-height:14px;color:#000;font-weight:400;;transform:scaleX(0.9600);transform-origin:left top;">Unit Of</div>
<div class="t" style="left:336px;top:438.36px;font-size:11px;line-height:14px;color:#000;font-weight:400;;transform:scaleX(0.9600);transform-origin:left top;">Measure</div>
<div class="t" style="right:1067px;text-align:right;top:425.36px;font-size:11px;line-height:14px;color:#000;font-weight:400;;transform:scaleX(0.9600);transform-origin:right top;">Quantity Unit</div>
<div class="t" style="right:1067px;text-align:right;top:438.36px;font-size:11px;line-height:14px;color:#000;font-weight:400;;transform:scaleX(0.9600);transform-origin:right top;">Of Measure</div>
<div class="t" style="right:1022px;text-align:right;top:431.36px;font-size:11px;line-height:14px;color:#000;font-weight:400;;transform:scaleX(0.9600);transform-origin:right top;">Qty</div>
<div class="t" style="left:536px;top:431.36px;font-size:11px;line-height:14px;color:#000;font-weight:400;;transform:scaleX(0.9861);transform-origin:left top;">Unit Cost Ex. Tax</div>
<div class="t" style="right:870px;text-align:right;top:431.36px;font-size:11px;line-height:14px;color:#000;font-weight:400;;transform:scaleX(0.9600);transform-origin:right top;">FX Rate</div>
<div class="t" style="right:778px;text-align:right;top:425.36px;font-size:11px;line-height:14px;color:#000;font-weight:400;;transform:scaleX(0.9600);transform-origin:right top;">FX Unit Cost Ex.</div>
<div class="t" style="right:778px;text-align:right;top:438.36px;font-size:11px;line-height:14px;color:#000;font-weight:400;;transform:scaleX(0.9600);transform-origin:right top;">Tax</div>
<div class="t" style="left:777px;top:431.36px;font-size:11px;line-height:14px;color:#000;font-weight:400;;transform:scaleX(0.9600);transform-origin:left top;">Tax Rate</div>
<div class="t" style="left:868px;top:431.36px;font-size:11px;line-height:14px;color:#000;font-weight:400;;transform:scaleX(0.9600);transform-origin:left top;">Total Tax Amount</div>
<div class="t" style="right:506px;text-align:right;top:425.36px;font-size:11px;line-height:14px;color:#000;font-weight:400;;transform:scaleX(0.9600);transform-origin:right top;">Unit Cost Inc.</div>
<div class="t" style="right:506px;text-align:right;top:438.36px;font-size:11px;line-height:14px;color:#000;font-weight:400;;transform:scaleX(0.9600);transform-origin:right top;">Tax</div>
<div class="t" style="right:415px;text-align:right;top:425.36px;font-size:11px;line-height:14px;color:#000;font-weight:400;;transform:scaleX(0.9600);transform-origin:right top;">Line Total Ex.</div>
<div class="t" style="right:415px;text-align:right;top:438.36px;font-size:11px;line-height:14px;color:#000;font-weight:400;;transform:scaleX(0.9600);transform-origin:right top;">Tax</div>
<div class="t" style="right:324px;text-align:right;top:425.36px;font-size:11px;line-height:14px;color:#000;font-weight:400;;transform:scaleX(0.9600);transform-origin:right top;">Line Total Inc.</div>
<div class="t" style="right:324px;text-align:right;top:438.36px;font-size:11px;line-height:14px;color:#000;font-weight:400;;transform:scaleX(0.9600);transform-origin:right top;">Tax</div>
<div class="t" style="right:233px;text-align:right;top:425.36px;font-size:11px;line-height:14px;color:#000;font-weight:400;;transform:scaleX(0.9600);transform-origin:right top;">FX Line Total Ex.</div>
<div class="t" style="right:233px;text-align:right;top:438.36px;font-size:11px;line-height:14px;color:#000;font-weight:400;;transform:scaleX(0.9600);transform-origin:right top;">Tax</div>
<div class="t" style="right:172px;text-align:right;top:431.36px;font-size:11px;line-height:14px;color:#000;font-weight:400;;transform:scaleX(0.9600);transform-origin:right top;">Prev Del</div>
<div class="t" style="left:1403px;top:431.36px;font-size:11px;line-height:14px;color:#000;font-weight:400;;transform:scaleX(0.9600);transform-origin:left top;">iVendKey</div>
<div class="t" style="left:42px;top:458.36px;font-size:11px;line-height:14px;color:#000;font-weight:400;;transform:scaleX(0.9600);transform-origin:left top;">0U-GargBag</div>
<div style="left:163px;top:459px;width:17px;height:17px;background:#cdcdcd;border:1px solid #b0b0b0;box-sizing:border-box"></div>
<svg style="position:absolute;left:166px;top:464px" width="11" height="6" viewBox="0 0 11 6"><path d="M1 5.5 L5.5 1 L10 5.5 Z" fill="#666"/></svg>
<div class="t" style="left:184px;top:458.36px;font-size:11px;line-height:14px;color:#000;font-weight:400;;transform:scaleX(0.9492);transform-origin:left top;">Green Plastic Bin Liners</div>
<div class="t" style="left:337px;top:458.36px;font-size:11px;line-height:14px;color:#000;font-weight:400;;transform:scaleX(0.9600);transform-origin:left top;">Ea</div>
<div style="left:392px;top:458px;width:17px;height:19px;background:#e1e1e1;border:1px solid #adadad;box-sizing:border-box"></div>
<svg style="position:absolute;left:395.5px;top:465px" width="10" height="6" viewBox="0 0 10 6"><path d="M1 1 L5 5 L9 1" fill="none" stroke="#444" stroke-width="1"/></svg>
<div class="t" style="right:1068px;text-align:right;top:458.36px;font-size:11px;line-height:14px;color:#000;font-weight:400;;transform:scaleX(0.9600);transform-origin:right top;">1</div>
<div class="t" style="right:1022px;text-align:right;top:458.36px;font-size:11px;line-height:14px;color:#000;font-weight:400;;transform:scaleX(0.9600);transform-origin:right top;">1</div>
<div class="t" style="right:931px;text-align:right;top:458.36px;font-size:11px;line-height:14px;color:#000;font-weight:400;;transform:scaleX(0.9600);transform-origin:right top;">0.20</div>
<div class="t" style="right:870px;text-align:right;top:458.36px;font-size:11px;line-height:14px;color:#000;font-weight:400;;transform:scaleX(0.9600);transform-origin:right top;">1.000000</div>
<div class="t" style="right:779px;text-align:right;top:458.36px;font-size:11px;line-height:14px;color:#000;font-weight:400;;transform:scaleX(0.9600);transform-origin:right top;">0.20</div>
<div class="t" style="left:777px;top:458.36px;font-size:11px;line-height:14px;color:#000;font-weight:400;;transform:scaleX(0.9600);transform-origin:left top;">GST In(11)</div>
<div style="left:848px;top:458px;width:17px;height:19px;background:#e1e1e1;border:1px solid #adadad;box-sizing:border-box"></div>
<svg style="position:absolute;left:851.5px;top:465px" width="10" height="6" viewBox="0 0 10 6"><path d="M1 1 L5 5 L9 1" fill="none" stroke="#444" stroke-width="1"/></svg>
<div class="t" style="right:597px;text-align:right;top:458.36px;font-size:11px;line-height:14px;color:#000;font-weight:400;;transform:scaleX(0.9600);transform-origin:right top;">0.02</div>
<div class="t" style="right:506px;text-align:right;top:458.36px;font-size:11px;line-height:14px;color:#000;font-weight:400;;transform:scaleX(0.9600);transform-origin:right top;">0.22</div>
<div class="t" style="right:415px;text-align:right;top:458.36px;font-size:11px;line-height:14px;color:#000;font-weight:400;;transform:scaleX(0.9600);transform-origin:right top;">0.20</div>
<div class="t" style="right:324px;text-align:right;top:458.36px;font-size:11px;line-height:14px;color:#000;font-weight:400;;transform:scaleX(0.9600);transform-origin:right top;">0.22</div>
<div class="t" style="right:233px;text-align:right;top:458.36px;font-size:11px;line-height:14px;color:#000;font-weight:400;;transform:scaleX(0.9600);transform-origin:right top;">0.20</div>
<div class="t" style="right:172px;text-align:right;top:458.36px;font-size:11px;line-height:14px;color:#000;font-weight:400;;transform:scaleX(0.9600);transform-origin:right top;">0</div>
<div style="left:1383px;top:459px;width:17px;height:17px;background:#e4e4e4;border:1.5px solid #a8a8a8;box-sizing:border-box"></div>
<svg style="position:absolute;left:1385px;top:460px" width="13" height="15" viewBox="0 0 13 15"><path d="M1 2.6 H12" stroke="#3c4a66" stroke-width="1"/><path d="M4.5 2.2 Q6.5 0.3 8.5 2.2" fill="none" stroke="#3c4a66" stroke-width="1"/><path d="M2.5 4.2 H10.5 V14 H2.5 Z" fill="#3c4a66"/><rect x="4" y="5.2" width="1.3" height="7.5" fill="#e4e4e4"/><rect x="7.7" y="5.2" width="1.3" height="7.5" fill="#e4e4e4"/></svg>
<div style="left:1387px;top:374px;width:159px;height:155px;border:5px solid #ed1c24;box-sizing:border-box"></div>
<div style="left:1px;top:873px;width:1547px;height:93px;background:#eef1f9"></div>
<div style="left:4px;top:876px;width:1543px;height:89px;border:1px solid #a9bbd6;box-sizing:border-box"></div>
<div style="left:3px;top:877px;width:351px;height:86px;background:#fff;border:1px solid;border-color:#6e6e6e #e6e6e6 #e6e6e6 #6e6e6e;border-width:2px 1px 1px 2px;box-sizing:border-box"></div>
<div style="left:5px;top:879px;width:52px;height:20px;background:linear-gradient(#f8f9fb 0%,#eef1f6 45%,#dbe1ec 100%);border-right:1px solid #c9d0dc;border-bottom:1px solid #d0d7e2;box-sizing:border-box"></div>
<div style="left:57px;top:879px;width:69px;height:20px;background:linear-gradient(#f8f9fb 0%,#eef1f6 45%,#dbe1ec 100%);border-right:1px solid #c9d0dc;border-bottom:1px solid #d0d7e2;box-sizing:border-box"></div>
<div style="left:126px;top:879px;width:86px;height:20px;background:linear-gradient(#f8f9fb 0%,#eef1f6 45%,#dbe1ec 100%);border-right:1px solid #c9d0dc;border-bottom:1px solid #d0d7e2;box-sizing:border-box"></div>
<div style="left:212px;top:879px;width:69px;height:20px;background:linear-gradient(#f8f9fb 0%,#eef1f6 45%,#dbe1ec 100%);border-right:1px solid #c9d0dc;border-bottom:1px solid #d0d7e2;box-sizing:border-box"></div>
<div style="left:281px;top:879px;width:70px;height:20px;background:linear-gradient(#f8f9fb 0%,#eef1f6 45%,#dbe1ec 100%);border-right:1px solid #c9d0dc;border-bottom:1px solid #d0d7e2;box-sizing:border-box"></div>
<div style="left:5px;top:899px;width:52px;height:20px;background:#e6ebf5;border-right:1px solid #d2d2d2;border-bottom:1px solid #d2d2d2;box-sizing:border-box"></div>
<div style="left:57px;top:899px;width:69px;height:20px;border-right:1px solid #d2d2d2;border-bottom:1px solid #d2d2d2;box-sizing:border-box"></div>
<div style="left:126px;top:899px;width:86px;height:20px;border-right:1px solid #d2d2d2;border-bottom:1px solid #d2d2d2;box-sizing:border-box"></div>
<div style="left:212px;top:899px;width:69px;height:20px;border-right:1px solid #d2d2d2;border-bottom:1px solid #d2d2d2;box-sizing:border-box"></div>
<div style="left:281px;top:899px;width:70px;height:20px;border-right:1px solid #d2d2d2;border-bottom:1px solid #d2d2d2;box-sizing:border-box"></div>
<div style="left:5px;top:919px;width:52px;height:20px;background:#e6ebf5;border-right:1px solid #d2d2d2;border-bottom:1px solid #d2d2d2;box-sizing:border-box"></div>
<div style="left:57px;top:919px;width:69px;height:20px;border-right:1px solid #d2d2d2;border-bottom:1px solid #d2d2d2;box-sizing:border-box"></div>
<div style="left:126px;top:919px;width:86px;height:20px;border-right:1px solid #d2d2d2;border-bottom:1px solid #d2d2d2;box-sizing:border-box"></div>
<div style="left:212px;top:919px;width:69px;height:20px;border-right:1px solid #d2d2d2;border-bottom:1px solid #d2d2d2;box-sizing:border-box"></div>
<div style="left:281px;top:919px;width:70px;height:20px;border-right:1px solid #d2d2d2;border-bottom:1px solid #d2d2d2;box-sizing:border-box"></div>
<div style="left:5px;top:939px;width:52px;height:20px;background:#e6ebf5;border-right:1px solid #d2d2d2;border-bottom:1px solid #d2d2d2;box-sizing:border-box"></div>
<div style="left:57px;top:939px;width:69px;height:20px;border-right:1px solid #d2d2d2;border-bottom:1px solid #d2d2d2;box-sizing:border-box"></div>
<div style="left:126px;top:939px;width:86px;height:20px;border-right:1px solid #d2d2d2;border-bottom:1px solid #d2d2d2;box-sizing:border-box"></div>
<div style="left:212px;top:939px;width:69px;height:20px;border-right:1px solid #d2d2d2;border-bottom:1px solid #d2d2d2;box-sizing:border-box"></div>
<div style="left:281px;top:939px;width:70px;height:20px;border-right:1px solid #d2d2d2;border-bottom:1px solid #d2d2d2;box-sizing:border-box"></div>
<div class="t" style="right:1428px;text-align:right;top:882.36px;font-size:11px;line-height:14px;color:#000;font-weight:400;;transform:scaleX(0.9600);transform-origin:right top;">Ex Amount</div>
<div class="t" style="left:128px;top:882.36px;font-size:11px;line-height:14px;color:#000;font-weight:400;;transform:scaleX(0.9600);transform-origin:left top;">Tax Rate</div>
<div class="t" style="right:1273px;text-align:right;top:882.36px;font-size:11px;line-height:14px;color:#000;font-weight:400;;transform:scaleX(0.9600);transform-origin:right top;">Tax Amount</div>
<div class="t" style="right:1204px;text-align:right;top:882.36px;font-size:11px;line-height:14px;color:#000;font-weight:400;;transform:scaleX(0.9600);transform-origin:right top;">Inc Amount</div>
<div class="t" style="left:7px;top:899.36px;font-size:11px;line-height:14px;color:#000;font-weight:400;;transform:scaleX(0.9600);transform-origin:left top;">Freight</div>
<div class="t" style="right:1428px;text-align:right;top:899.36px;font-size:11px;line-height:14px;color:#000;font-weight:400;;transform:scaleX(0.9600);transform-origin:right top;">0.00</div>
<div class="t" style="left:128px;top:899.36px;font-size:11px;line-height:14px;color:#000;font-weight:400;;transform:scaleX(0.9600);transform-origin:left top;">GST In(11)</div>
<div class="t" style="right:1273px;text-align:right;top:899.36px;font-size:11px;line-height:14px;color:#000;font-weight:400;;transform:scaleX(0.9600);transform-origin:right top;">0.00</div>
<div class="t" style="right:1204px;text-align:right;top:899.36px;font-size:11px;line-height:14px;color:#000;font-weight:400;;transform:scaleX(0.9600);transform-origin:right top;">0.00</div>
<div class="t" style="left:7px;top:919.36px;font-size:11px;line-height:14px;color:#000;font-weight:400;;transform:scaleX(0.9600);transform-origin:left top;">Duty</div>
<div class="t" style="right:1428px;text-align:right;top:919.36px;font-size:11px;line-height:14px;color:#000;font-weight:400;;transform:scaleX(0.9600);transform-origin:right top;">0.00</div>
<div class="t" style="left:128px;top:919.36px;font-size:11px;line-height:14px;color:#000;font-weight:400;;transform:scaleX(0.9600);transform-origin:left top;">GST In(11)</div>
<div class="t" style="right:1273px;text-align:right;top:919.36px;font-size:11px;line-height:14px;color:#000;font-weight:400;;transform:scaleX(0.9600);transform-origin:right top;">0.00</div>
<div class="t" style="right:1204px;text-align:right;top:919.36px;font-size:11px;line-height:14px;color:#000;font-weight:400;;transform:scaleX(0.9600);transform-origin:right top;">0.00</div>
<div class="t" style="left:7px;top:939.36px;font-size:11px;line-height:14px;color:#000;font-weight:400;;transform:scaleX(0.9600);transform-origin:left top;">Insurance</div>
<div class="t" style="right:1428px;text-align:right;top:939.36px;font-size:11px;line-height:14px;color:#000;font-weight:400;;transform:scaleX(0.9600);transform-origin:right top;">0.00</div>
<div class="t" style="left:128px;top:939.36px;font-size:11px;line-height:14px;color:#000;font-weight:400;;transform:scaleX(0.9600);transform-origin:left top;">GST In(11)</div>
<div class="t" style="right:1273px;text-align:right;top:939.36px;font-size:11px;line-height:14px;color:#000;font-weight:400;;transform:scaleX(0.9600);transform-origin:right top;">0.00</div>
<div class="t" style="right:1204px;text-align:right;top:939.36px;font-size:11px;line-height:14px;color:#000;font-weight:400;;transform:scaleX(0.9600);transform-origin:right top;">0.00</div>
<div style="left:194px;top:900px;width:17px;height:18px;background:#e1e1e1;border:1px solid #adadad;box-sizing:border-box"></div>
<svg style="position:absolute;left:197.5px;top:907px" width="10" height="6" viewBox="0 0 10 6"><path d="M1 1 L5 5 L9 1" fill="none" stroke="#444" stroke-width="1"/></svg>
<div class="t" style="left:366px;top:889.36px;font-size:11px;line-height:14px;color:#000;font-weight:400;;">Reorder Methods</div>
<div style="left:364px;top:910px;width:185px;height:21px;border:1px solid #abc0de;box-sizing:border-box"></div>
<div class="t" style="left:368px;top:914.36px;font-size:11px;line-height:14px;color:#000;font-weight:400;;">Replenish to Minimum</div>
<svg style="position:absolute;left:539px;top:919px" width="6" height="4" viewBox="0 0 6 4"><path d="M0 0 H6 L3 3 Z" fill="#c48aa4"/></svg>
<div style="left:555px;top:910px;width:77px;height:22px;background:linear-gradient(#fbfbfb,#ececec);border:1px solid #c2c2c2;border-radius:3px;box-sizing:border-box"></div>
<div class="t" style="left:393px;width:400px;text-align:center;top:914.36px;font-size:11px;line-height:14px;color:#8d8d8d;font-weight:400;;">Auto Search</div>
<div class="t" style="left:1229px;top:887.36px;font-size:11px;line-height:14px;color:#000;font-weight:400;;transform:scaleX(1.0566);transform-origin:left top;">Total Cubic</div>
<div class="t" style="left:1229px;top:914.36px;font-size:11px;line-height:14px;color:#000;font-weight:400;;transform:scaleX(1.0443);transform-origin:left top;">Total Weight</div>
<div style="left:1307px;top:883px;width:76px;height:21px;border:1px solid #a4a4a4;box-sizing:border-box"></div>
<div class="t" style="right:170px;text-align:right;top:887.36px;font-size:11px;line-height:14px;color:#000;font-weight:400;;">0.00</div>
<div style="left:1307px;top:910px;width:76px;height:21px;border:1px solid #a4a4a4;box-sizing:border-box"></div>
<div class="t" style="right:170px;text-align:right;top:914.36px;font-size:11px;line-height:14px;color:#000;font-weight:400;;">0.00</div>
<div class="t" style="left:1401px;top:886.36px;font-size:11px;line-height:14px;color:#000;font-weight:400;;">Gross</div>
<div class="t" style="left:1401px;top:913.36px;font-size:11px;line-height:14px;color:#000;font-weight:400;;">Tax</div>
<div class="t" style="left:1401px;top:940.36px;font-size:11px;line-height:14px;color:#000;font-weight:400;;">Net</div>
<div style="left:1465px;top:882px;width:76px;height:21px;border:1px solid #a4a4a4;box-sizing:border-box"></div>
<div class="t" style="right:12px;text-align:right;top:886.36px;font-size:11px;line-height:14px;color:#000;font-weight:400;;">0.20</div>
<div style="left:1465px;top:909px;width:76px;height:21px;border:1px solid #a4a4a4;box-sizing:border-box"></div>
<div class="t" style="right:12px;text-align:right;top:913.36px;font-size:11px;line-height:14px;color:#000;font-weight:400;;">0.02</div>
<div style="left:1465px;top:936px;width:76px;height:21px;border:1px solid #a4a4a4;box-sizing:border-box"></div>
<div class="t" style="right:12px;text-align:right;top:940.36px;font-size:11px;line-height:14px;color:#000;font-weight:400;;">0.22</div>
<div style="left:0px;top:965px;width:1548px;height:61px;background:#42526d"></div>
<div style="left:0px;top:966px;width:1px;height:23px;background:#9a9a9a"></div>
<div style="left:0px;top:989px;width:1548px;height:1px;background:#a3a7ae"></div>
<div class="t" style="left:4px;top:972.30px;font-size:11.2px;line-height:14px;color:#fff;font-weight:700;;transform:scaleX(1.0078);transform-origin:left top;">Warehouse : Main / New South Wales</div>
<div class="t" style="left:701px;top:1002.36px;font-size:11px;line-height:14px;color:#fff;font-weight:400;;transform:scaleX(0.9997);transform-origin:left top;">Main / New South Wales</div>
<div style="left:0px;top:1026px;width:1548px;height:3px;background:#0e1418"></div>
<div style="left:517px;top:1026px;width:36px;height:3px;background:#474a4d"></div>
<svg style="position:absolute;left:1410px;top:1000px" width="16" height="17" viewBox="0 0 16 17"><rect x="1.5" y="1.5" width="10.5" height="13.5" rx="1" fill="#e4e4e4" stroke="#b8b8b8" stroke-width="0.8"/><rect x="3" y="3" width="2.5" height="2.5" fill="#a8a8a8"/><path d="M6.5 4 H10.5 M3 7.5 H10.5 M3 10 H9 M3 12.5 H8" stroke="#b5b5b5" stroke-width="0.9"/><circle cx="11.8" cy="13" r="3" fill="#fff" stroke="#8a5cb0" stroke-width="1.1"/><path d="M11.6 11.5 V13.3 H13.2" fill="none" stroke="#8a5cb0" stroke-width="0.8"/></svg>
<svg style="position:absolute;left:1432px;top:1000px" width="18" height="18" viewBox="0 0 18 18"><circle cx="4.8" cy="4.8" r="2.6" fill="#62c46e"/><path d="M1 12 Q1 7.6 4.8 7.6 Q8.6 7.6 8.6 12 Z" fill="#62c46e"/><circle cx="9.2" cy="3.6" r="2.8" fill="#5cc0e6"/><path d="M5.2 11.5 Q5.2 6.8 9.2 6.8 Q13.2 6.8 13.2 11.5 Z" fill="#5cc0e6"/><circle cx="11.2" cy="12.2" r="4.3" fill="#e23c3c" stroke="#fff" stroke-width="0.6"/><path d="M9.4 10.4 L13 14 M13 10.4 L9.4 14" stroke="#fff" stroke-width="1.5"/></svg>
<svg style="position:absolute;left:1456px;top:999px" width="18" height="18" viewBox="0 0 18 18"><circle cx="12" cy="5.2" r="4" fill="#f2c14e"/><circle cx="12" cy="4.6" r="1.3" fill="#42526d"/><path d="M10 8.5 L2 15" stroke="#f2c14e" stroke-width="2.4" stroke-linecap="round"/><path d="M4.5 13 L6 14.5" stroke="#f2c14e" stroke-width="1.5"/><rect x="9.5" y="11" width="6.5" height="5.5" rx="0.5" fill="#e7a92b"/><path d="M10.8 11 V9.8 Q12.75 7.8 14.7 9.8 V11" fill="none" stroke="#e7a92b" stroke-width="1.2"/></svg>
<div class="t" style="left:1492px;top:994.36px;font-size:11px;line-height:14px;color:#fff;font-weight:400;;transform:scaleX(1.0252);transform-origin:left top;">6:53 PM</div>
<div class="t" style="left:1487px;top:1006.36px;font-size:11px;line-height:14px;color:#fff;font-weight:400;;transform:scaleX(0.9807);transform-origin:left top;">10/05/2018</div>
</body></html>
